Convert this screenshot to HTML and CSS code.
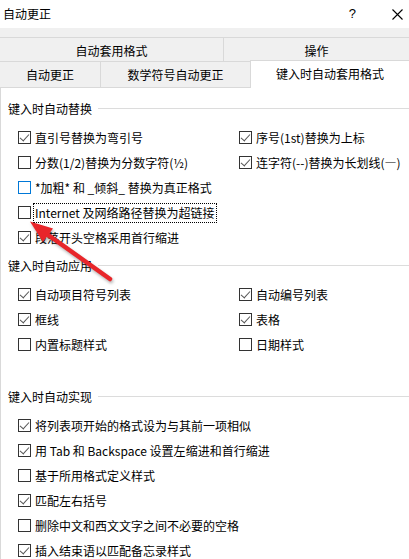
FILE: index.html
```html
<!DOCTYPE html>
<html lang="zh-CN">
<head>
<meta charset="utf-8">
<title>自动更正</title>
<link rel="stylesheet" href="styles.css">
</head>
<body>
<div class="window">
  <div class="titlebar">
    <span class="title">自动更正</span>
    <span class="help">?</span>
    <svg class="close" width="11" height="11" viewBox="0 0 11 11"><path d="M0.5 0.5 L10.5 10.5 M10.5 0.5 L0.5 10.5" stroke="#000" stroke-width="1.1" fill="none"/></svg>
  </div>
  <div class="tabstrip">
    <div class="tabrow upper">
      <div class="tab tab-format">自动套用格式</div>
      <div class="tab tab-action">操作</div>
    </div>
    <div class="tabrow lower">
      <div class="tab tab-auto">自动更正</div>
      <div class="tab tab-math">数学符号自动更正</div>
      <div class="tab tab-active">键入时自动套用格式</div>
    </div>
  </div>
  <div class="panel">
    <section class="group g1">
      <div class="legend">键入时自动替换</div>
      <div class="grid">
        <div class="item"><span class="box checked"></span><span class="label">直引号替换为弯引号</span></div>
        <div class="item"><span class="box checked"></span><span class="label">序号(1st)替换为上标</span></div>
        <div class="item"><span class="box"></span><span class="label">分数(1/2)替换为分数字符(½)</span></div>
        <div class="item"><span class="box checked"></span><span class="label">连字符(--)替换为长划线(—)</span></div>
        <div class="item full"><span class="box hover"></span><span class="label">*加粗* 和 _倾斜_ 替换为真正格式</span></div>
        <div class="item full"><span class="box"></span><span class="label focus">Internet 及网络路径替换为超链接</span></div>
        <div class="item full"><span class="box checked"></span><span class="label">段落开头空格采用首行缩进</span></div>
      </div>
    </section>
    <section class="group g2">
      <div class="legend">键入时自动应用</div>
      <div class="grid">
        <div class="item"><span class="box checked"></span><span class="label">自动项目符号列表</span></div>
        <div class="item"><span class="box checked"></span><span class="label">自动编号列表</span></div>
        <div class="item"><span class="box checked"></span><span class="label">框线</span></div>
        <div class="item"><span class="box checked"></span><span class="label">表格</span></div>
        <div class="item"><span class="box"></span><span class="label">内置标题样式</span></div>
        <div class="item"><span class="box"></span><span class="label">日期样式</span></div>
      </div>
    </section>
    <section class="group g3">
      <div class="legend">键入时自动实现</div>
      <div class="grid">
        <div class="item full"><span class="box checked"></span><span class="label">将列表项开始的格式设为与其前一项相似</span></div>
        <div class="item full"><span class="box checked"></span><span class="label">用 Tab 和 Backspace 设置左缩进和首行缩进</span></div>
        <div class="item full"><span class="box"></span><span class="label">基于所用格式定义样式</span></div>
        <div class="item full"><span class="box checked"></span><span class="label">匹配左右括号</span></div>
        <div class="item full"><span class="box"></span><span class="label">删除中文和西文文字之间不必要的空格</span></div>
        <div class="item full"><span class="box checked"></span><span class="label">插入结束语以匹配备忘录样式</span></div>
      </div>
    </section>
  </div>
  <svg class="arrow" width="409" height="559" viewBox="0 0 409 559">
    <line x1="44" y1="232" x2="110" y2="279" stroke="#e8262a" stroke-width="4.5" stroke-linecap="round"/>
    <polygon points="30,221.5 53,228.5 43,242" fill="#e8262a"/>
  </svg>
</div>
</body>
</html>
```
FILE: styles.css
```css
* { box-sizing: border-box; }
html, body { margin: 0; padding: 0; }
body {
  width: 409px;
  height: 559px;
  overflow: hidden;
  background: #fff;
  font-family: "Noto Sans CJK SC", "Noto Sans", sans-serif;
  font-size: 12px;
  color: #000;
}
.window { position: relative; width: 409px; height: 559px; overflow: hidden; }
.titlebar {
  height: 28px;
  display: flex;
  align-items: center;
  padding-left: 3px;
  background: #fff;
  line-height: 16px;
}
.title { font-size: 12px; }
.help { margin-left: auto; margin-right: 36px; font-family: "Liberation Sans", sans-serif; font-size: 13px; }
.close { margin-right: 6px; display: block; }
.tabstrip { background: #f0f0f0; padding-top: 9px; }
.tabrow { display: flex; }
.tabrow.upper {
  height: 25px;
  border-top: 1px solid #d9d9d9;
  border-bottom: 1px solid #d9d9d9;
}
.tabrow.lower { height: 26px; }
.tab {
  display: flex;
  align-items: center;
  justify-content: center;
  line-height: 16px;
}
.tab-format { width: 224px; border-right: 1px solid #d9d9d9; padding-top: 2px; }
.tab-action { flex: 1; padding-top: 2px; }
.tab-auto { width: 101px; border-right: 1px solid #d9d9d9; border-bottom: 1px solid #d9d9d9; }
.tab-math { width: 149px; border-bottom: 1px solid #d9d9d9; }
.tab-active {
  flex: 1;
  position: relative;
  z-index: 1;
  margin-top: -2px;
  height: 28px;
  background: #fff;
  border-top: 1px solid #d9d9d9;
  border-left: 1px solid #d9d9d9;
  padding-bottom: 2px;
}
.panel {
  height: 480px;
  background: #fff;
  border-left: 1px solid #d9d9d9;
  padding-top: 13px;
}
.legend {
  display: flex;
  align-items: center;
  padding-left: 7px;
  height: 16px;
  line-height: 16px;
}
.legend::after {
  content: "";
  flex: 1;
  height: 1px;
  background: #dcdcdc;
  margin-left: 6px;
  margin-top: -2px;
}
.grid {
  display: grid;
  grid-template-columns: 221px 1fr;
  grid-auto-rows: 25px;
  padding-left: 17px;
  margin-top: 8px;
}
.g2 { margin-top: 8px; }
.g3 { margin-top: 32px; }
.item { display: flex; align-items: center; white-space: nowrap; }
.item.full { grid-column: 1 / span 2; }
.box {
  width: 13px;
  height: 13px;
  border: 1px solid #333;
  background: #fff;
  margin-right: 4px;
  flex: none;
  position: relative;
}
.box.hover { border-color: #0078d7; }
.box.checked::after {
  content: "";
  position: absolute;
  left: 3px;
  top: 0px;
  width: 4px;
  height: 8px;
  border-right: 1px solid #555;
  border-bottom: 1px solid #555;
  transform: rotate(42deg);
  transform-origin: center;
}
.label { line-height: 16px; }
.label.focus {
  border: 1px dotted #000;
  margin-left: -2px;
  padding: 1px 1px;
  line-height: 16px;
}
.arrow {
  position: absolute;
  left: 0;
  top: 0;
  pointer-events: none;
  filter: drop-shadow(1px 2px 1.5px rgba(0,0,0,0.3));
}
```
